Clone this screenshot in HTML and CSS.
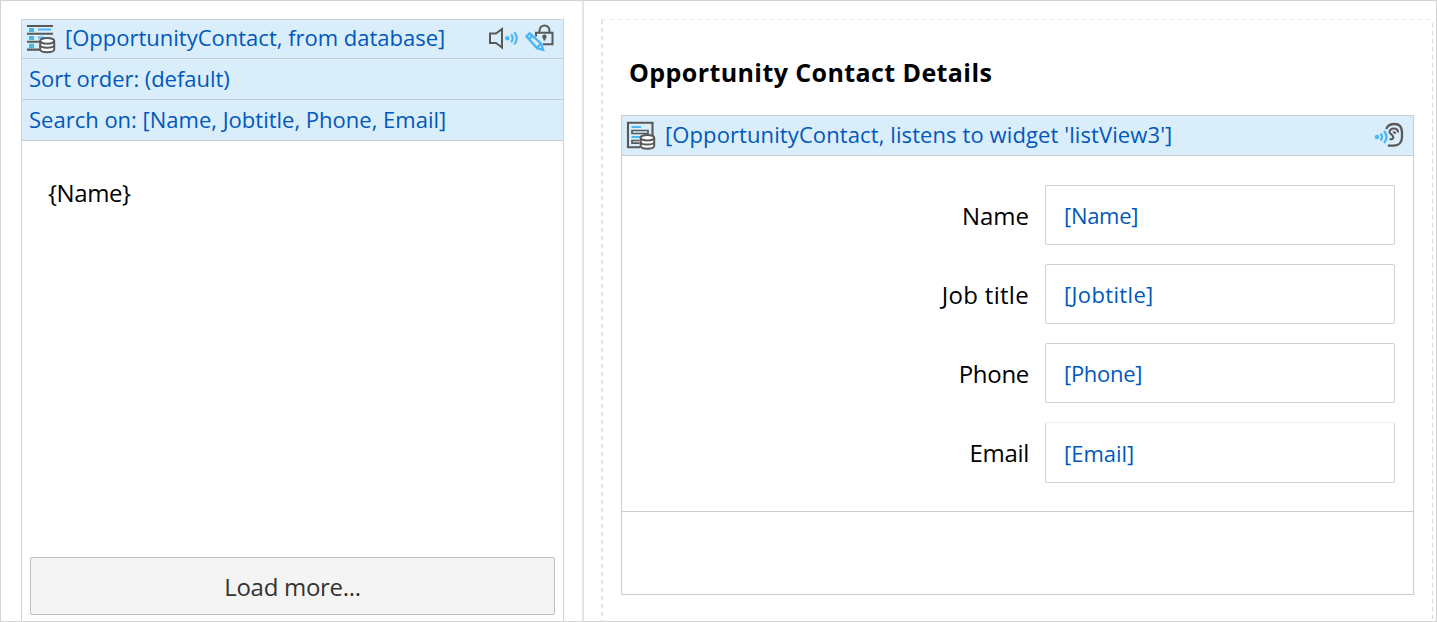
FILE: index.html
```html
<!DOCTYPE html>
<html lang="en">
<head>
<meta charset="utf-8">
<title>Opportunity Contact</title>
<link rel="stylesheet" href="styles.css">
</head>
<body>
<main class="page">
  <section class="pane-left">
    <div class="list-view">
      <header class="bar bar-source">
        <svg class="icon" width="30" height="30" viewBox="0 0 30 30" fill="none">
          <g fill="#4ab5f7"><path d="M3 3h5v4H3zM3 11h5v4H3zM3 18.800h5v4.200H3z"/></g>
          <path d="M12 4.500h13M12 12.500h6" stroke="#4ab5f7" stroke-width="2"/>
          <path d="M1 .900h26M1 8.800h26M1 16.700h13M1 24.600h13" stroke="#595959" stroke-width="2.100"/>
          <path d="M14.200 16v8.500c0 3.600 14 3.600 14 0V16" fill="#fff" stroke="#595959" stroke-width="2"/>
          <ellipse cx="21.200" cy="15.800" rx="7" ry="2.900" fill="#fff" stroke="#595959" stroke-width="2"/>
          <path d="M14.200 20c0 3.500 14 3.500 14 0" stroke="#595959" stroke-width="2"/>
        </svg>
        <span class="blue source-list">[OpportunityContact, from database]</span>
        <svg class="icon list-actions" width="68" height="30" viewBox="0 0 68 30" fill="none">
          <path d="M2 9.500h6l6-4.500v18.500L8 19H2z" stroke="#595959" stroke-width="2"/>
          <circle cx="19.300" cy="14.300" r="2.200" fill="#4ab5f7"/>
          <path d="M23 10.500q3.500 3.800 0 7.600M26.200 8.200q5.200 6.100 0 12.200" stroke="#4ab5f7" stroke-width="2.200"/>
          <path d="M48 12.500V8.800h16.500v11.500H55M51.500 8.500V7c0-7.500 10-7.500 10 0v1.500" stroke="#595959" stroke-width="2"/>
          <path d="M56.400 11.200v5.300" stroke="#595959" stroke-width="2"/><circle cx="56.400" cy="12.800" r="2.200" fill="#595959"/>
          <path d="m38.500 12.300 3.200-2.900 11.500 10.200 1.800 6.200-6-1.500zM41.200 15l3.300-3.100M49.300 24.500l1.200-2.500 3-2.300" stroke="#4ab5f7" stroke-width="2.400" fill="#daedfb"/>
        </svg>
      </header>
      <div class="bar blue sort-row"><span>Sort order: (default)</span></div>
      <div class="bar blue search-row"><span>Search on: [Name, Jobtitle, Phone, Email]</span></div>
      <div class="list-body"><span class="name">{Name}</span></div>
      <button class="load-more" type="button"><span>Load more...</span></button>
    </div>
  </section>
  <section class="pane-right">
    <div class="dashed">
      <h1 class="title"><span>Opportunity Contact Details</span></h1>
      <div class="data-view">
        <header class="bar view-bar">
          <svg class="icon" width="30" height="30" viewBox="0 0 30 30" fill="none">
            <path d="M14 26.200H2V1.800h24.500V15" stroke="#595959" stroke-width="2.100"/>
            <path d="M5.500 6H15M5.500 16H14" stroke="#4ab5f7" stroke-width="2.200"/>
            <path d="M6 9.500h16v3H6zM13.500 19.500H6v2.700h7.500" stroke="#595959" stroke-width="1.700"/>
            <path d="M14.700 17v8c0 3.600 13.500 3.600 13.500 0v-8" fill="#fff" stroke="#595959" stroke-width="2"/>
            <ellipse cx="21.400" cy="16.800" rx="6.800" ry="2.700" fill="#fff" stroke="#595959" stroke-width="2"/>
            <path d="M14.700 21c0 3.400 13.500 3.400 13.500 0" stroke="#595959" stroke-width="2"/>
          </svg>
          <span class="blue source-view">[OpportunityContact, listens to widget 'listView3']</span>
          <svg class="icon ear" width="32" height="30" viewBox="0 0 32 30" fill="none">
            <circle cx="4" cy="16" r="2.200" fill="#4ab5f7"/>
            <path d="M7.500 12.500q3 3.500 0 7M11 10q5 6 0 12" stroke="#4ab5f7" stroke-width="2.300"/>
            <path d="M13.300 8C14.500 4.400 17.500 3 21.500 3c5 0 7.500 3.500 7.500 8.500V16c0 5.200-3 8.600-8.200 8.600h-6" stroke="#595959" stroke-width="2.300"/>
            <path d="M25 11.500c0-5.200-8.500-5.200-8.500-.2 0 1.800 3.800 2.200 3.800 5 0 1.600-1.700 2.400-3.700 1.800M20 11.300q1.800-.5 2 1.500" stroke="#595959" stroke-width="2.100"/>
          </svg>
        </header>
        <div class="form">
          <div class="field"><label class="l-name">Name</label><div class="input blue"><span class="v-name">[Name]</span></div></div>
          <div class="field"><label class="l-job">Job title</label><div class="input blue"><span class="v-job">[Jobtitle]</span></div></div>
          <div class="field"><label class="l-phone">Phone</label><div class="input blue"><span class="v-name">[Phone]</span></div></div>
          <div class="field"><label class="l-email">Email</label><div class="input input-email blue"><span>[Email]</span></div></div>
        </div>
        <footer class="view-footer"></footer>
      </div>
    </div>
  </section>
</main>
</body>
</html>
```
FILE: styles.css
```css
* { box-sizing: border-box; }
body { margin: 0; background: #fff; color: #000; font-family: "Open Sans", "Noto Sans", sans-serif; overflow: hidden; }
.page { width: 1437px; height: 622px; display: flex; border: 1px solid #d3d3d3; }
.pane-left { width: 583px; padding: 18px 18px 0 20px; border-right: 2px solid #e4e4e4; }
.list-view { width: 543px; height: 602px; display: flex; flex-direction: column; border: 1px solid #d0d2d5; border-bottom: 0; }
.bar { display: flex; align-items: center; flex: none; height: 41px; padding: 0 0 2px 7px; background: #daedfb; border-bottom: 1px solid #c8cdd2; white-space: nowrap; }
.bar-source { height: 39px; padding: 0 0 0 4px; }
.blue { color: #0058bc; font-size: 22px; line-height: 30px; }
.icon { flex: none; display: block; }
.bar-source > .icon:first-child { margin-top: 2px; }
.source-list, .source-view { margin: 0 0 4px 9px; }
.source-view { letter-spacing: 0.1px; }
.list-actions { margin-left: auto; margin-right: 7px; }
.sort-row { letter-spacing: -0.05px; }
.list-body { flex: 1; padding: 35px 26px 0; font-size: 24px; line-height: 34px; letter-spacing: -0.4px; }
.load-more { flex: none; height: 58px; margin: 0 8px 6px; padding: 0; border: 1px solid #bfbfbf; border-radius: 2px; background: #f4f4f4; color: #333; font: 24px "Open Sans", sans-serif; letter-spacing: -0.3px; }
.pane-right { flex: 1; padding: 18px 3px 0 18px; }
.dashed { height: 602px; margin-left: -1px; padding: 0 18px 0 20px;
  background:
    repeating-linear-gradient(to right, #efefef 0 5px, transparent 5px 8px) 0 0 / 100% 1px no-repeat,
    repeating-linear-gradient(to bottom, transparent 0 1px, #e2e2e2 1px 5px, transparent 5px 8px) 0 0 / 2px 100% no-repeat,
    repeating-linear-gradient(to bottom, transparent 0 4px, #d8d8d8 4px 8px) 100% 0 / 1px 100% no-repeat; }
.title { margin: 0; height: 96px; padding: 36px 0 0 8px; font-size: 25px; line-height: 34px; font-weight: 700; letter-spacing: 0.41px; white-space: nowrap; }
.data-view { height: 480px; width: 793px; border: 1px solid #cbcdcf; }
.view-bar { height: 40px; padding: 0 0 0 4px; }
.ear { margin-left: auto; margin-right: 8px; }
.form { height: 355px; padding: 29px 18px 0 0; display: flex; flex-direction: column; gap: 19px; }
.field { display: flex; align-items: center; justify-content: flex-end; }
.field label { font-size: 24px; line-height: 34px; margin: 1px 16px 0 0; white-space: nowrap; }
.field .l-job { letter-spacing: 0.3px; }
.field .l-phone, .field .l-email { letter-spacing: -0.3px; }
.input { width: 350px; height: 60px; padding: 0 0 0 18px; display: flex; align-items: center; border: 1px solid #d2d2d2; border-radius: 2px; }
.input-email { border-top-color: #eee; height: 61px; }
.v-name { letter-spacing: -0.3px; }
.v-job { letter-spacing: 0.35px; }
.view-footer { border-top: 1px solid #cbcdcf; height: 83px; }
```
